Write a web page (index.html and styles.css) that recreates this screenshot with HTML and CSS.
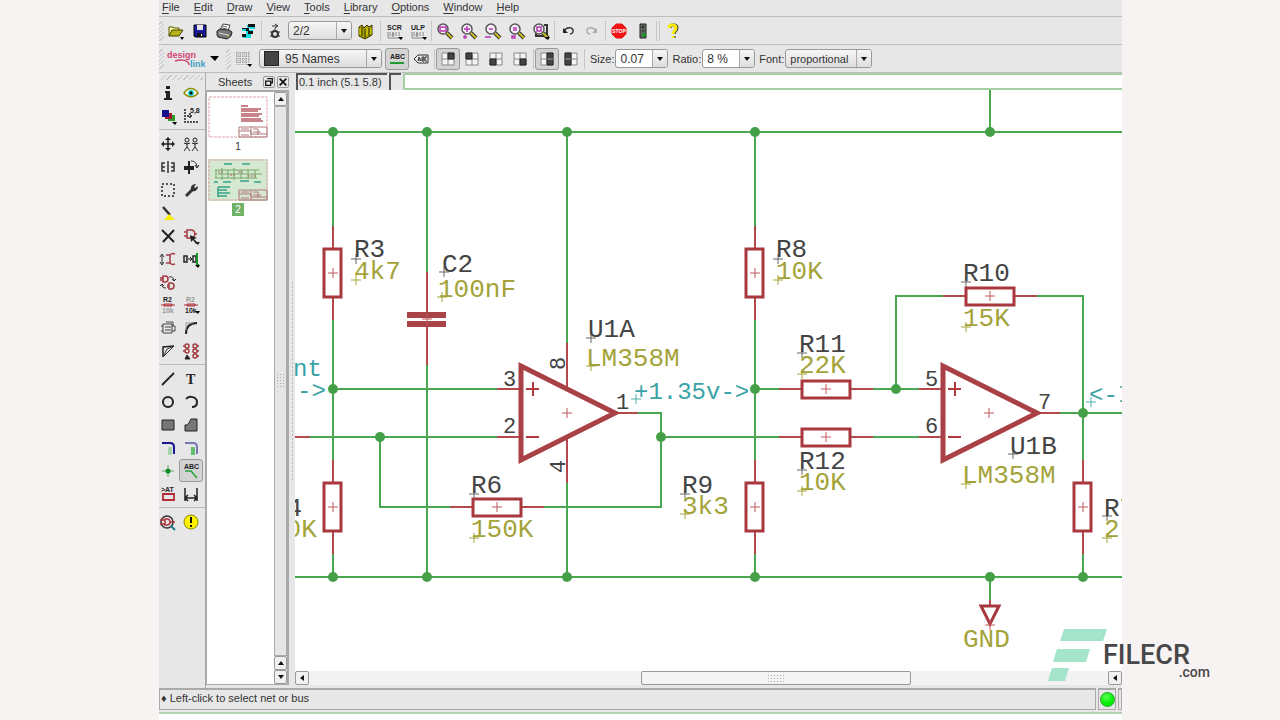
FILE: index.html
```
<!DOCTYPE html>
<html lang="en">
<head>
    <meta charset="UTF-8">
    <meta name="viewport" content="width=device-width, initial-scale=1.0">
    <title>Schematic Editor</title>
    <link rel="stylesheet" href="styles.css">
</head>
<body>
    <div class="window">
        <nav class="menubar">
            <button><u>F</u>ile</button>
            <button><u>E</u>dit</button>
            <button><u>D</u>raw</button>
            <button><u>V</u>iew</button>
            <button><u>T</u>ools</button>
            <button><u>L</u>ibrary</button>
            <button><u>O</u>ptions</button>
            <button><u>W</u>indow</button>
            <button><u>H</u>elp</button>
        </nav>

        <!-- Action toolbar -->
        <div class="toolbar">
            <span class="grip"></span>
            <button class="tool" aria-label="Open"><svg viewBox="0 0 18 18"><path d="M2 14V5h4l1 1h5v2" fill="#ffffa0" stroke="#555500"/><path d="M2 14l3-6h11l-4 6z" fill="#b5b51a" stroke="#444400"/><path d="M13 15h4l-2 3z"/></svg></button>
            <button class="tool" aria-label="Save"><svg viewBox="0 0 18 18"><path d="M3 3h12v12H4l-1-1z" fill="#1818a0" stroke="#000"/><path d="M6 3h6v5H6z" fill="#e8e8e8"/><path d="M6 11h6v4H6z" fill="#111"/><path d="M10 12h1v2h-1z" fill="#fff"/></svg></button>
            <button class="tool" aria-label="Print"><svg viewBox="0 0 18 18"><path d="M5 8l3-6 7 1-2 6z" fill="#fff" stroke="#444"/><path d="M2 9l3-2 9 1 3 2-1 4-4 3-9-2-1-2z" fill="#777" stroke="#222"/><path d="M4 11l9 2" stroke="#ddd"/><path d="M7 4l5 1M7 6l5 1" stroke="#666"/><path d="M12 13h2v1h-2z" fill="#dd3"/></svg></button>
            <button class="tool" aria-label="Board"><svg viewBox="0 0 18 18"><path d="M8 3h8v3H8zM7 8h7v4H7zM4 12h8v4H4z" fill="#18d8e0"/><path d="M9 2h7v3H9zM3 6h7v3H3zM9 9h5v3H9zM3 12h4v3H3z" fill="#111"/><path d="M11 5h5v2h-5zM3 7h4v2H3z" fill="#18d8e0"/></svg></button>
            <span class="separator"></span>
            <button class="tool" aria-label="Use gate"><svg viewBox="0 0 18 18" fill="none" stroke="#333"><circle cx="9" cy="12" r="3" stroke-width="2"/><path d="M9 9V6M4 10h2M12 10h2M4 14h2M12 14h2"/><path d="M6 4h5M9 2l3 2-3 2"/></svg></button>
            <div class="combo sheet-combo">
                <select aria-label="Sheet"><option>2/2</option></select>
                <span class="arrow"></span>
            </div>
            <button class="tool books" aria-label="Library"><svg viewBox="0 0 18 18"><path d="M3 5l3-2 2 3 3-3 2 2 3-2v10l-7 4-6-3z" fill="#aaa000" stroke="#333300"/><path d="M6 5v9M9 7v9M13 6v8" stroke="#333300"/><path d="M4 6v7M11 6v7M15 6v6" stroke="#e2d900"/></svg></button>
            <span class="separator"></span>
            <button class="tool" aria-label="Script"><svg viewBox="0 0 18 18"><text x="2" y="8" class="tiny">SCR</text><path d="M3 10v6h12M5 10v4M8 10l-1 4h2zM11 10v4M14 10v4" fill="none" stroke="#888"/><path d="M13 15h5l-2 3z"/></svg></button>
            <button class="tool" aria-label="ULP"><svg viewBox="0 0 18 18"><text x="2" y="8" class="tiny">ULP</text><path d="M3 10v6h12M5 10v4M8 10l-1 4h2zM11 10v4M14 10v4" fill="none" stroke="#888"/><path d="M13 15h5l-2 3z"/></svg></button>
            <span class="separator"></span>
            <button class="tool" aria-label="Zoom to fit"><svg viewBox="0 0 18 18"><use href="#lens"/><path d="M4 5h6v4H4z" class="zoom-mark"/></svg></button>
            <button class="tool" aria-label="Zoom in"><svg viewBox="0 0 18 18"><use href="#lens"/><path d="M7 4v6M4 7h6M5 13v4M3 15h4" class="zoom-mark"/></svg></button>
            <button class="tool" aria-label="Zoom out"><svg viewBox="0 0 18 18"><use href="#lens"/><path d="M5 7h4M1 15h6" class="zoom-mark"/></svg></button>
            <button class="tool" aria-label="Redraw"><svg viewBox="0 0 18 18"><use href="#lens"/><path d="M5 6h4M5 8h4M4 14h3v2H4z" class="zoom-mark"/></svg></button>
            <button class="tool" aria-label="Zoom select"><svg viewBox="0 0 18 18"><path d="M12 3h3v11H4v-3" fill="none" stroke="#333" stroke-width="2"/><use href="#lens"/><path d="M5 5h4v4H5z" class="zoom-mark"/><path d="M13 15h5l-2 3z"/></svg></button>
            <span class="separator"></span>
            <button class="tool" aria-label="Undo"><svg viewBox="0 0 18 18"><path d="M5 9c3-5 10-4 9 1-1 2-2 2-3 2" fill="none" stroke="#333" stroke-width="1.5"/><path d="M4 6v5h5z" fill="#222"/></svg></button>
            <button class="tool" aria-label="Redo"><svg viewBox="0 0 18 18"><path d="M13 9C10 4 3 5 4 10c1 2 2 2 3 2" fill="none" stroke="#aaa" stroke-width="1.5"/><path d="M14 6v5H9z" fill="#aaa"/></svg></button>
            <span class="separator"></span>
            <button class="tool" aria-label="Stop"><svg viewBox="0 0 18 18"><path d="M6 2h6l4 4v6l-4 4H6l-4-4V6z" fill="#f01414" stroke="#f01414"/><text x="9" y="11" class="stop-text">STOP</text></svg></button>
            <button class="tool" aria-label="Go"><svg viewBox="0 0 18 18"><path d="M6 2h6v14H6z" fill="#667066" stroke="#222"/><circle cx="9" cy="5" r="1.5" fill="#333"/><circle cx="9" cy="9" r="1.5" fill="#444"/><circle cx="10" cy="13" r="2" fill="#139a24"/></svg></button>
            <span class="separator double"></span>
            <button class="tool" aria-label="Help"><svg viewBox="0 0 18 18" fill="none"><path d="M6 6c0-4 7-4 7 0 0 3-3 3-3 6M10 14v2" stroke="#333" stroke-width="3"/><path d="M5 6c0-4 7-4 7 0 0 3-3 3-3 6M9 14v2" stroke="#f5ec00" stroke-width="3"/></svg></button>
        </div>

        <!-- Parameter toolbar -->
        <div class="toolbar">
            <span class="grip"></span>
            <button class="brand" aria-label="Design link"><svg viewBox="0 0 56 20"><text x="3" y="9" class="brand-design">design</text><text x="26" y="18" class="brand-link">link</text><path d="M11 12c6-2 14-1 14 4" fill="none" stroke="#cf4470" stroke-width="1.5"/><path d="M46 7h9l-4 5z"/></svg></button>
            <span class="grip"></span>
            <button class="tool" aria-label="Grid"><svg viewBox="0 0 18 18"><path d="M2 3h13M2 6h13M2 9h13M2 12h13M3 2v13M6 2v13M9 2v13M12 2v13M15 2v10" stroke="#888" stroke-dasharray="1 1"/><path d="M13 14h5l-2 3z"/></svg></button>
            <div class="combo layer-combo">
                <span class="swatch"></span>
                <select aria-label="Layer"><option>95 Names</option></select>
                <span class="arrow"></span>
            </div>
            <button class="tool pressed" aria-label="Show label"><svg viewBox="0 0 18 18"><text x="2" y="9" class="tiny">ABC</text><path d="M2 13h14" stroke="#1f9a33" stroke-width="2"/></svg></button>
            <button class="tool" aria-label="Cross reference"><svg viewBox="0 0 18 18"><path d="M2 9l4-4h10v8H6z" fill="none" stroke="#333"/><path d="M6 11l1-4 2 4M6 10h2M10 7v4M10 7h2v4h-2M10 9h2M15 7h-2v4h2" fill="none" stroke="#333"/></svg></button>
            <span class="separator"></span>
            <button class="tool pressed" aria-label="Align top right"><svg viewBox="0 0 18 18"><use href="#quad"/><path d="M9 3h6v6H9z" class="quad-fill"/></svg></button>
            <button class="tool" aria-label="Align top left"><svg viewBox="0 0 18 18"><use href="#quad"/><path d="M3 3h6v6H3z" class="quad-fill"/></svg></button>
            <button class="tool" aria-label="Align bottom left"><svg viewBox="0 0 18 18"><use href="#quad"/><path d="M3 9h6v6H3z" class="quad-fill"/></svg></button>
            <button class="tool" aria-label="Align bottom right"><svg viewBox="0 0 18 18"><use href="#quad"/><path d="M9 9h6v6H9z" class="quad-fill"/></svg></button>
            <span class="separator"></span>
            <button class="tool pressed" aria-label="Align right"><svg viewBox="0 0 18 18"><use href="#quad"/><path d="M9 3h6v12H9z" class="quad-fill"/><path d="M9 9h6" stroke="#999"/></svg></button>
            <button class="tool" aria-label="Align left"><svg viewBox="0 0 18 18"><use href="#quad"/><path d="M3 3h6v12H3z" class="quad-fill"/><path d="M3 9h6" stroke="#999"/></svg></button>
            <span class="separator"></span>
            <label class="field-label" for="size">Size:</label>
            <div class="combo editable size-combo">
                <select id="size"><option>0.07</option></select>
                <span class="arrow"></span>
            </div>
            <label class="field-label" for="ratio">Ratio:</label>
            <div class="combo editable size-combo">
                <select id="ratio"><option>8 %</option></select>
                <span class="arrow"></span>
            </div>
            <label class="field-label" for="font">Font:</label>
            <div class="combo font-combo">
                <select id="font"><option>proportional</option></select>
                <span class="arrow"></span>
            </div>
        </div>

        <div class="main">
            <!-- Command palette -->
            <aside class="palette">
                <span class="palette-grip"></span>
                <div class="palette-group">
                    <button aria-label="Info"><svg viewBox="0 0 18 18"><path d="M7 2h4v3H7zM6 7h5v7h2v2H5v-2h2V9H6z" fill="#222"/></svg></button>
                    <button aria-label="Show"><svg viewBox="0 0 18 18"><path d="M2 9c4-6 10-6 14 0-4 5-10 5-14 0z" fill="#fff" stroke="#8c8c00" stroke-width="1.5"/><circle cx="9" cy="9" r="3" fill="#1cc"/><circle cx="9" cy="9" r="1.5"/></svg></button>
                    <button aria-label="Display"><svg viewBox="0 0 18 18"><path d="M9 8h7v6H9z" fill="#2c9a2c"/><path d="M6 6h7v6H6z" fill="#a01830"/><path d="M3 3h7v7H3z" fill="#111190"/><path d="M13 15h5l-2 3z"/></svg></button>
                    <button aria-label="Mark"><svg viewBox="0 0 18 18"><path d="M3 2v13h13M5 9h5M8 6v5" fill="none" stroke="#222" stroke-width="1.5" stroke-dasharray="2 1"/><text x="8" y="6" class="tiny">5,8</text></svg></button>
                </div>
                <div class="palette-group">
                    <button aria-label="Move"><svg viewBox="0 0 18 18"><path d="M9 3v12M3 9h12" stroke="#222" stroke-width="1.5"/><path d="M9 2l3 3H6zM9 16l3-3H6zM2 9l3-3v6zM16 9l-3-3v6z" fill="#222"/></svg></button>
                    <button aria-label="Copy"><svg viewBox="0 0 18 18" fill="none" stroke="#222"><circle cx="5" cy="5" r="2"/><circle cx="13" cy="5" r="2"/><path d="M2 8l3 1 3-1M5 8v4l-3 4M5 12l3 4M10 8l3 1 3-1M13 8v4l-3 4M13 12l3 4"/></svg></button>
                    <button aria-label="Mirror"><svg viewBox="0 0 18 18" fill="none" stroke="#333"><path d="M6 5H3v8h3M3 9h3M12 5h3v8h-3M12 9h3M9 3v12" stroke-width="1.5"/></svg></button>
                    <button aria-label="Rotate"><svg viewBox="0 0 18 18" fill="none" stroke="#222"><path d="M7 3v13M2 9h10M2 11h10" stroke-width="2"/><path d="M9 3c4 0 6 3 6 6M13 7l2 3 2-3"/></svg></button>
                    <button aria-label="Group"><svg viewBox="0 0 18 18"><path d="M3 3h12v12H3z" fill="none" stroke="#222" stroke-width="1.5" stroke-dasharray="2 2"/></svg></button>
                    <button aria-label="Change"><svg viewBox="0 0 18 18"><path d="M4 15l7-7" stroke="#333" stroke-width="3"/><path d="M9 9c-1-4 2-6 5-6l-2 3 1 1 3-2c0 4-3 6-6 5z" fill="#333"/></svg></button>
                    <button aria-label="Paste"><svg viewBox="0 0 18 18"><path d="M4 3l7 8" stroke="#333" stroke-width="2.5"/><path d="M10 10l6 6H5z" fill="#f8f000"/></svg></button>
                    <span></span>
                    <button aria-label="Delete"><svg viewBox="0 0 18 18"><path d="M3 3l12 12M15 3L4 15" stroke="#222" stroke-width="2"/></svg></button>
                    <button aria-label="Add"><svg viewBox="0 0 18 18"><path d="M5 3h4c5 0 5 8 0 8H5zM2 5h3M2 9h3M12 7h3" fill="none" stroke="#a33b40" stroke-width="1.5"/><path d="M8 8l7 3-3 1 4 4-2 1-3-4-2 2zM13 15h5l-2 3z" fill="#222"/></svg></button>
                    <button aria-label="Pinswap"><svg viewBox="0 0 18 18" fill="none"><path d="M3 5v9M1 7l2-3 2 3M1 12l2 3 2-3" stroke="#333"/><path d="M16 4c-3-1-5 0-5 2v6c0 2 2 3 5 2M7 5h4M7 13h4" stroke="#a33b40" stroke-width="1.5"/></svg></button>
                    <button aria-label="Replace"><svg viewBox="0 0 18 18"><path d="M2 6h3v6H2zM11 6h3v6h-3z" fill="none" stroke="#222" stroke-width="1.5"/><path d="M6 9h4M8 7l2 2-2 2" stroke="#222" fill="none"/><path d="M15 3v12h2" fill="none" stroke="#17942a" stroke-width="2"/><path d="M13 15h5l-2 3z"/></svg></button>
                    <button aria-label="Gateswap"><svg viewBox="0 0 18 18" fill="none" stroke="#a33b40"><path d="M4 3h2c4 0 4 6 0 6H4zM1 5h3M1 7h3M10 10h2c4 0 4 6 0 6h-2zM8 12h2M8 14h2" stroke-width="1.5"/><path d="M10 4c3-1 5 1 5 4M13 6l2 2 2-2M7 15c-3 0-4-1-4-4M1 13l2-2 2 2" stroke="#333"/></svg></button>
                    <span></span>
                    <button aria-label="Name"><svg viewBox="0 0 18 18"><text x="4" y="6" class="tiny">R2</text><path d="M2 9h14M5 8h8v2H5z" stroke="#b03038" fill="none"/><text x="3" y="17" class="tiny faded">10k</text></svg></button>
                    <button aria-label="Value"><svg viewBox="0 0 18 18"><text x="4" y="6" class="tiny faded">R2</text><path d="M2 9h14M5 8h8v2H5z" stroke="#b03038" fill="none"/><text x="3" y="17" class="tiny">10k</text><path d="M13 15h5l-2 3z"/></svg></button>
                    <button aria-label="Smash"><svg viewBox="0 0 18 18" fill="none" stroke="#444"><path d="M4 5h9v9H4zM2 7h2M2 12h2M13 7h3v5h-3M7 3h7v4M6 8h6M6 11h6"/></svg></button>
                    <button aria-label="Miter"><svg viewBox="0 0 18 18" fill="none"><path d="M4 15C4 8 8 4 15 4" stroke="#222" stroke-width="2"/><path d="M4 11V4h7" stroke="#999"/></svg></button>
                    <button aria-label="Split"><svg viewBox="0 0 18 18" fill="none"><path d="M4 15V5l11-1" stroke="#222" stroke-width="1.5"/><path d="M4 15l4-8 7-3M4 15l11-11" stroke="#333"/></svg></button>
                    <button aria-label="Invoke"><svg viewBox="0 0 18 18" fill="none" stroke="#a33b40" stroke-width="1.5"><circle cx="5" cy="4" r="2"/><circle cx="13" cy="4" r="2"/><circle cx="5" cy="9" r="2"/><circle cx="13" cy="9" r="2"/><circle cx="13" cy="14" r="2"/><path d="M1 4h2M15 4h2M1 9h2M15 9h2M15 14h2"/><path d="M3 17l2-4 3 4z" fill="#222" stroke="#222" stroke-width="1"/></svg></button>
                </div>
                <div class="palette-group">
                    <button aria-label="Wire"><svg viewBox="0 0 18 18"><path d="M3 15L15 3" stroke="#222" stroke-width="1.8"/></svg></button>
                    <button aria-label="Text"><svg viewBox="0 0 18 18"><text x="4" y="14" class="letter">T</text></svg></button>
                    <button aria-label="Circle"><svg viewBox="0 0 18 18"><circle cx="9" cy="9" r="5" fill="none" stroke="#222" stroke-width="2"/></svg></button>
                    <button aria-label="Arc"><svg viewBox="0 0 18 18"><path d="M4 6c3-4 11-2 11 3 0 3-2 5-5 5" fill="none" stroke="#222" stroke-width="2"/></svg></button>
                    <button aria-label="Rectangle"><svg viewBox="0 0 18 18"><path d="M3 4h12v10H3z" fill="#777" stroke="#222"/></svg></button>
                    <button aria-label="Polygon"><svg viewBox="0 0 18 18"><path d="M3 15V9c4 0 4-3 6-6h6v12z" fill="#777" stroke="#222"/></svg></button>
                    <button aria-label="Bus"><svg viewBox="0 0 18 18" fill="none"><path d="M11 8v8" stroke="#a5d3aa" stroke-width="4"/><path d="M3 4h8c3 0 4 2 4 4v7" stroke="#17178d" stroke-width="2"/></svg></button>
                    <button aria-label="Net"><svg viewBox="0 0 18 18" fill="none"><path d="M11 8v8" stroke="#60bf6c" stroke-width="4"/><path d="M3 4h8c3 0 4 2 4 4v7" stroke="#7777b5" stroke-width="2"/></svg></button>
                    <button aria-label="Junction"><svg viewBox="0 0 18 18"><path d="M9 3v12M3 9h12" stroke="#60a968"/><circle cx="9" cy="9" r="2.5" fill="#128b22"/></svg></button>
                    <button class="pressed" aria-label="Label"><svg viewBox="0 0 18 18"><text x="2" y="7" class="tiny">ABC</text><path d="M3 9h6l6 7" fill="none" stroke="#26a43d" stroke-width="1.5"/></svg></button>
                    <button aria-label="Attribute"><svg viewBox="0 0 18 18"><text x="2" y="7" class="tiny">&gt;AT</text><path d="M4 9h11v6H4z" fill="none" stroke="#b32c35" stroke-width="1.8"/></svg></button>
                    <button aria-label="Dimension"><svg viewBox="0 0 18 18"><path d="M3 3v13M15 3v13M3 13h12M6 10l-3 3 3 3M12 10l3 3-3 3" fill="none" stroke="#222" stroke-width="1.5"/></svg></button>
                </div>
                <div class="palette-group">
                    <button aria-label="ERC"><svg viewBox="0 0 18 18" fill="none"><circle cx="8" cy="9" r="6" stroke="#333" stroke-width="1.5"/><path d="M1 7h5M1 11h5M6 6h2c4 0 4 6 0 6H6zM11 9h5" stroke="#b3333a" stroke-width="1.5"/><path d="M12 13l4 4" stroke="#168287" stroke-width="2"/></svg></button>
                    <button aria-label="Errors"><svg viewBox="0 0 18 18"><circle cx="9" cy="9" r="7" fill="#fff200" stroke="#888800"/><path d="M9 4v6M9 12v2" stroke="#111" stroke-width="2"/></svg></button>
                </div>
            </aside>

            <!-- Sheet list -->
            <section class="sheets">
                <header class="sheets-header">
                    <h2>Sheets</h2>
                    <button aria-label="Float"><svg viewBox="0 0 12 12"><path d="M4 2h6v5H8M2 5h6v5H2z" fill="none" stroke="#111" stroke-width="1.5"/></svg></button>
                    <button aria-label="Close"><svg viewBox="0 0 12 12"><path d="M2 2l8 8M10 2l-8 8" stroke="#111" stroke-width="2"/></svg></button>
                </header>
                <div class="sheets-body">
                    <div class="sheet-list">
                        <figure class="sheet">
                            <svg viewBox="0 0 60 42"><path d="M1 1h58v40H1z" class="sheet-frame"/><path d="M33 10h7M33 13h20M33 15h17M33 18h21M33 20h18M33 23h20M33 25h22" stroke="#b65c64" stroke-width="1.5"/><use href="#title-block"/></svg>
                            <figcaption>1</figcaption>
                        </figure>
                        <figure class="sheet active">
                            <svg viewBox="0 0 60 42"><path d="M1 1h58v40H1z" class="sheet-frame"/><path d="M7 11h44M7 19h42M8 11v8M14 9v12M20 11v8M26 9v12M33 11v9M40 10v10M47 11v8M10 15h44" fill="none" stroke="#74a866"/><path d="M10 13h5M22 16h5M30 13h6M40 17h8" stroke="#ab6a62" stroke-dasharray="2 1"/><path d="M16 5h8M34 5h8M6 23h4M15 23h8M32 22h9M46 23h7M10 28h12M10 31h9M10 34h12M10 37h9M10 28v10" stroke="#35a28a" stroke-width="1.5"/><use href="#title-block"/></svg>
                            <figcaption>2</figcaption>
                        </figure>
                    </div>
                    <div class="vscroll">
                        <button class="up" aria-label="Scroll up"></button>
                        <span class="vthumb"></span>
                        <button class="up" aria-label="Scroll up"></button>
                        <button class="down" aria-label="Scroll down"></button>
                    </div>
                </div>
            </section>
            <span class="splitter"></span>

            <!-- Drawing area -->
            <section class="editor">
                <div class="command-row">
                    <span class="coords">0.1 inch (5.1 5.8)</span>
                    <span class="coords-extra"></span>
                    <input type="text" class="command" aria-label="Command">
                </div>
                <div class="canvas">
                    <svg class="schematic">
                        <defs>
                            <g id="dot"><circle r="5"/></g>
                            <path id="cross" d="M-5 0H5M0-5V5"/>
                            <g id="resistor"><path d="M-47 0h24M23 0h24" class="pin"/><path d="M-24-8h48v17h-48z" class="body"/><use href="#cross" class="origin"/></g>
                            <g id="opamp"><path d="M-70-24h24M-70 24h24M48 0h23" class="pin"/><path d="M-46-47v94L48 0z" class="amp"/><path d="M-41-24h13M-34-31v14M-41 24h13" class="sign"/><use href="#cross" class="origin"/></g>
                        </defs>
                        <g transform="translate(-295 -90)">
                            <path class="net" d="M295 132H1122M295 577H1122M990 90V132M990 577V600
                                M333 132V226M333 319V460M333 553V577
                                M427 132V272M427 365V577M567 132V343M567 483V577
                                M755 132V226M755 319V460M755 553V577
                                M333 389H497M310 437H497M380 437V507H450M544 507H661V413H638M661 437H779
                                M755 389H779M873 389H919M873 437H919M896 389V296H943M1037 296H1083V460M1083 553V577M1060 413H1122"/>
                            <path class="pin" d="M295 437H310M427 272V314M427 326V365M567 343V388M567 437V483M990 600V606"/>
                            <path class="plate" d="M407 315H446M407 324H446"/>
                            <path class="body" d="M981 606H999L990 624Z"/>

                            <use href="#resistor" transform="translate(333 273) rotate(90)"/>
                            <use href="#resistor" transform="translate(333 507) rotate(90)"/>
                            <use href="#resistor" transform="translate(755 273) rotate(90)"/>
                            <use href="#resistor" transform="translate(755 507) rotate(90)"/>
                            <use href="#resistor" transform="translate(1083 507) rotate(90)"/>
                            <use href="#resistor" x="497" y="507"/>
                            <use href="#resistor" x="826" y="389"/>
                            <use href="#resistor" x="826" y="437"/>
                            <use href="#resistor" x="990" y="296"/>
                            <use href="#opamp" x="567" y="413"/>
                            <use href="#opamp" x="989" y="413"/>

                            <g class="junctions">
                                <use href="#dot" x="333" y="132"/><use href="#dot" x="427" y="132"/><use href="#dot" x="567" y="132"/><use href="#dot" x="755" y="132"/><use href="#dot" x="990" y="132"/>
                                <use href="#dot" x="333" y="577"/><use href="#dot" x="427" y="577"/><use href="#dot" x="567" y="577"/><use href="#dot" x="755" y="577"/><use href="#dot" x="990" y="577"/><use href="#dot" x="1083" y="577"/>
                                <use href="#dot" x="333" y="389"/><use href="#dot" x="380" y="437"/><use href="#dot" x="661" y="437"/><use href="#dot" x="755" y="389"/><use href="#dot" x="896" y="389"/><use href="#dot" x="1083" y="413"/>
                            </g>

                            <g class="origin"><use href="#cross" x="427" y="319"/><use href="#cross" x="990" y="625"/></g>
                            <g class="name-mark">
                                <use href="#cross" x="356" y="259"/><use href="#cross" x="444" y="272"/><use href="#cross" x="591" y="338"/><use href="#cross" x="778" y="259"/><use href="#cross" x="966" y="282"/><use href="#cross" x="802" y="353"/><use href="#cross" x="802" y="470"/><use href="#cross" x="1013" y="454"/><use href="#cross" x="474" y="494"/><use href="#cross" x="685" y="494"/><use href="#cross" x="1107" y="516"/>
                            </g>
                            <g class="value-mark">
                                <use href="#cross" x="356" y="280"/><use href="#cross" x="442" y="297"/><use href="#cross" x="591" y="366"/><use href="#cross" x="778" y="280"/><use href="#cross" x="966" y="327"/><use href="#cross" x="802" y="374"/><use href="#cross" x="802" y="491"/><use href="#cross" x="966" y="484"/><use href="#cross" x="474" y="538"/><use href="#cross" x="685" y="514"/><use href="#cross" x="1107" y="538"/>
                            </g>
                            <g class="net-mark"><use href="#cross" x="636" y="399"/><use href="#cross" x="1091" y="402"/></g>

                            <g class="name">
                                <text x="354" y="257">R3</text>
                                <text x="442" y="272">C2</text>
                                <text x="588" y="337">U1A</text>
                                <text x="776" y="257">R8</text>
                                <text x="963" y="281">R10</text>
                                <text x="799" y="352">R11</text>
                                <text x="799" y="469">R12</text>
                                <text x="1010" y="454">U1B</text>
                                <text x="471" y="493">R6</text>
                                <text x="682" y="493">R9</text>
                                <text x="271" y="516">R4</text>
                                <text x="1104" y="516">R7</text>
                            </g>
                            <g class="value">
                                <text x="354" y="279">4k7</text>
                                <text x="438" y="297">100nF</text>
                                <text x="586" y="366">LM358M</text>
                                <text x="776" y="279">10K</text>
                                <text x="963" y="326">15K</text>
                                <text x="799" y="373">22K</text>
                                <text x="799" y="490">10K</text>
                                <text x="962" y="483">LM358M</text>
                                <text x="471" y="537">150K</text>
                                <text x="682" y="514">3k3</text>
                                <text x="270" y="537">10K</text>
                                <text x="1104" y="537">2k</text>
                                <text x="963" y="647">GND</text>
                            </g>
                            <g class="net-label">
                                <text x="293" y="376">nt</text>
                                <text x="297" y="398">-&gt;</text>
                                <text x="634" y="399">+1.35v-&gt;</text>
                                <text x="1089" y="402">&lt;-I</text>
                            </g>
                            <g class="pin-number">
                                <text x="503" y="386">3</text>
                                <text x="503" y="433">2</text>
                                <text x="616" y="409">1</text>
                                <text x="925" y="386">5</text>
                                <text x="925" y="433">6</text>
                                <text x="1038" y="409">7</text>
                                <text transform="translate(565 370) rotate(-90)">8</text>
                                <text transform="translate(565 473) rotate(-90)">4</text>
                            </g>
                        </g>
                    </svg>
                </div>
                <div class="hscroll">
                    <button class="left" aria-label="Scroll left"></button>
                    <span class="track"></span>
                    <span class="hthumb"></span>
                    <span class="track-end"></span>
                    <button class="left" aria-label="Scroll left"></button>
                </div>
            </section>
        </div>

        <footer class="statusbar">
            <span class="message">♦ Left-click to select net or bus</span>
            <span class="led-box"><span class="led"></span></span>
            <span class="led-next"></span>
        </footer>
        <div class="bottom-edge"></div>
    </div>

    <div class="watermark">
        <svg viewBox="0 0 60 52"><path d="M16 0h43l-4 12H12zM9 20h33l-4 13H5zM4 39h17l-4 13H0z" fill="#a3e4cb"/></svg>
        <div class="watermark-text">
            <strong>FILECR</strong>
            <span>.com</span>
        </div>
    </div>

    <!-- Shared icon parts -->
    <svg class="shared" aria-hidden="true">
        <defs>
            <g id="lens"><circle cx="7" cy="7" r="5" fill="#f7eef7" stroke="#555" stroke-width="1.5"/><path d="M11 11l5 5" stroke="#333" stroke-width="4"/><path d="M11 11l5 5" stroke="#c9c021" stroke-width="2"/></g>
            <path id="quad" d="M3 3h12v12H3zM9 3v12M3 9h12" fill="#f4f4f4" stroke="#888"/>
            <path id="title-block" d="M31 31h28v10H31zM31 35h12v3h16M43 31v10M50 33v6M33 33h8M45 36h8M33 39h8M45 33h5" fill="none" stroke="#b0787c"/>
        </defs>
    </svg>
</body>
</html>
```
FILE: styles.css
```
* {
    box-sizing: border-box;
}

body {
    margin: 0;
    height: 100vh;
    background: #f7f3f2;
    color: #333;
    font-family: "Liberation Sans", Arial, sans-serif;
    font-size: 11px;
    overflow: hidden;
}

button {
    margin: 0;
    padding: 0;
    border: none;
    background: none;
    color: inherit;
    font: inherit;
}

.window {
    display: flex;
    flex-direction: column;
    height: 100vh;
    margin: 0 158px 0 159px;
    background: #e7e7e7;
}

.shared {
    display: none;
}

/* Menu bar */
.menubar {
    display: flex;
    gap: 14px;
    height: 16px;
    padding: 0 3px;
}

.menubar button {
    height: 14px;
    line-height: 12px;
}

.menubar u {
    text-underline-offset: 2px;
}

/* Toolbars */
.toolbar {
    display: flex;
    align-items: center;
    height: 28px;
    border-top: 1px solid #bdbdbd;
}

.grip {
    width: 5px;
    height: 20px;
    background: repeating-linear-gradient(135deg, #e7e7e7 0 2px, #c9c9c9 2px 3px);
}

.tool {
    display: flex;
    justify-content: center;
    align-items: center;
    flex: none;
    width: 24px;
    height: 22px;
    border: 1px solid transparent;
    border-radius: 3px;
}

.tool svg,
.palette svg {
    width: 18px;
    height: 18px;
    flex: none;
}

.tool.pressed,
.palette .pressed {
    background: #d3d3d3;
    border: 1px solid #999;
}

.separator {
    flex: none;
    width: 1px;
    height: 20px;
    margin: 0 1px;
    background: #c6c6c6;
}

.separator.double {
    width: 4px;
    border: solid #c6c6c6;
    border-width: 0 1px;
    background: none;
}

.tiny {
    font: bold 7px "Liberation Sans", Arial, sans-serif;
    fill: #222;
}

.faded {
    fill: #999;
}

.letter {
    font: bold 14px "Liberation Serif", serif;
    fill: #222;
}

.stop-text {
    font: bold 5px "Liberation Sans", Arial, sans-serif;
    fill: #fff;
    text-anchor: middle;
}

.zoom-mark {
    fill: none;
    stroke: #b63bb6;
    stroke-width: 1.5;
}

.quad-fill {
    fill: #444;
    stroke: #222;
}

.brand {
    width: 62px;
    height: 22px;
}

.brand svg {
    display: block;
    width: 56px;
    height: 20px;
}

.brand-design {
    font: bold 9px "Liberation Sans", Arial, sans-serif;
    fill: #d2446f;
}

.brand-link {
    font: bold 9px "Liberation Sans", Arial, sans-serif;
    fill: #3f9fc4;
}

.combo {
    display: flex;
    align-items: center;
    flex: none;
    height: 19px;
    border: 1px solid #999;
    border-radius: 3px;
    background: linear-gradient(#f6f6f6, #dedede);
    overflow: hidden;
}

.combo select {
    flex: 1;
    min-width: 0;
    height: 17px;
    padding: 0 4px;
    border: none;
    appearance: none;
    background: transparent;
    color: #333;
    font: 12px "Liberation Sans", Arial, sans-serif;
}

.combo.editable {
    background: #fff;
}

.arrow {
    display: flex;
    justify-content: center;
    align-items: center;
    flex: none;
    width: 15px;
    height: 17px;
    border-left: 1px solid #aaa;
    background: linear-gradient(#f6f6f6, #dedede);
}

.arrow::before {
    content: "";
    border: solid transparent;
    border-width: 4px 3px 0;
    border-top-color: #111;
}

.sheet-combo {
    width: 64px;
    margin: 0 1px;
}

.books {
    margin-right: 2px;
}

.layer-combo {
    width: 123px;
    margin: 0 3px 0 4px;
}

.size-combo {
    width: 53px;
}

.font-combo {
    width: 87px;
}

.font-combo select {
    font-size: 11px;
}

.swatch {
    flex: none;
    width: 15px;
    height: 15px;
    margin: 0 2px 0 4px;
    border: 1px solid #222;
    background: #444;
}

.field-label {
    padding-left: 4px;
    margin-right: 1px;
}

/* Main area */
.main {
    display: flex;
    flex: 1;
    min-height: 0;
    border-top: 1px solid #bdbdbd;
}

.palette {
    flex: none;
    width: 47px;
    border-right: 1px solid #aaa;
}

.palette-grip {
    display: block;
    width: 42px;
    height: 5px;
    margin: 2px 2px 1px;
    background: repeating-linear-gradient(135deg, #e7e7e7 0 3px, #c4c4c4 3px 4px);
}

.palette-group {
    display: grid;
    grid-template-columns: 20px 24px;
    grid-auto-rows: 23px;
}

.palette-group + .palette-group {
    margin-top: 2px;
    padding-top: 2px;
    border-top: 1px solid #bbb;
}

.palette-group button {
    display: flex;
    justify-content: center;
    align-items: center;
    border-radius: 3px;
}

.palette-group button:nth-child(odd) {
    margin-right: -2px;
    padding-right: 4px;
}

.sheets {
    display: flex;
    flex-direction: column;
    flex: none;
    width: 83px;
    padding-bottom: 3px;
}

.sheets-header {
    display: flex;
    align-items: center;
    gap: 2px;
    height: 17px;
    padding-left: 12px;
}

.sheets-header h2 {
    flex: 1;
    margin: 0;
    font-size: 11px;
    font-weight: normal;
}

.sheets-header button {
    width: 12px;
    height: 12px;
    border: 1px solid #999;
    border-radius: 2px;
}

.sheets-header svg {
    display: block;
    width: 10px;
    height: 10px;
}

.sheets-body {
    display: flex;
    flex: 1;
    min-height: 0;
    border: solid #aaa;
    border-width: 2px 2px 1px 1px;
}

.sheet-list {
    flex: 1;
    background: #fff;
}

.sheet {
    margin: 4px 0 0 1px;
    width: 60px;
    text-align: center;
}

.sheet svg {
    display: block;
    width: 60px;
    height: 42px;
}

.sheet + .sheet {
    margin-top: 6px;
}

.sheet figcaption {
    width: 12px;
    margin: 2px auto 0;
    font-size: 10px;
    line-height: 13px;
}

.sheet-frame {
    fill: none;
    stroke: #dba1a5;
    stroke-dasharray: 3 1;
}

.sheet.active svg {
    background: #d5e8d0;
}

.sheet.active figcaption {
    background: #6fb368;
    color: #fff;
}

.vscroll {
    display: flex;
    flex-direction: column;
    width: 13px;
}

.vscroll button,
.hscroll button {
    display: flex;
    align-items: center;
    justify-content: center;
    flex: none;
    height: 14px;
    border: 1px solid #999;
    border-radius: 2px;
    background: #f1f1f1;
}

.up::before,
.down::before,
.left::before {
    content: "";
    border: solid transparent;
}

.up::before {
    border-width: 0 3px 4px;
    border-bottom-color: #111;
}

.down::before {
    border-width: 4px 3px 0;
    border-top-color: #111;
}

.left::before {
    border-width: 3px 4px 3px 0;
    border-right-color: #111;
}

.vthumb {
    display: flex;
    flex: 1;
    align-items: center;
    justify-content: center;
    border: 1px solid #aaa;
    background: #e6e6e6;
}

.vthumb::before {
    content: "";
    width: 9px;
    height: 16px;
    background: radial-gradient(#aaa 1px, transparent 1px) 0 0 / 3px 3px;
}

.splitter {
    display: flex;
    align-items: center;
    justify-content: center;
    flex: none;
    width: 6px;
}

.splitter::before {
    content: "";
    width: 3px;
    height: 200px;
    background: radial-gradient(#bbb 1px, transparent 1px) 0 0 / 3px 4px;
}

.editor {
    display: flex;
    flex-direction: column;
    flex: 1;
    min-width: 0;
}

.command-row {
    display: flex;
    gap: 2px;
    height: 17px;
    padding-left: 1px;
}

.coords,
.coords-extra {
    border: solid #555;
    border-width: 2px 0 0 2px;
}

.coords {
    width: 91px;
    padding-left: 1px;
    line-height: 14px;
    white-space: nowrap;
}

.coords-extra {
    width: 12px;
}

.command {
    flex: 1;
    min-width: 0;
    border: 2px solid #a5cfa0;
    border-right: none;
    border-radius: 2px 0 0 2px;
    background: #fff;
}

.canvas {
    flex: 1;
    min-height: 0;
    background: #fff;
}

/* Schematic drawing */
.schematic {
    display: block;
    width: 100%;
    height: 100%;
    fill: none;
}

.schematic text {
    font: 26px "Liberation Mono", "Courier New", monospace;
}

.net {
    stroke: #4aa94e;
    stroke-width: 2;
}

.junctions {
    fill: #43a047;
}

.pin {
    stroke: #b5484d;
    stroke-width: 2;
}

.body {
    stroke: #a8383d;
    stroke-width: 3;
}

.amp {
    stroke: #a84045;
    stroke-width: 5;
}

.plate {
    stroke: #a84347;
    stroke-width: 6;
}

.sign {
    stroke: #b0383e;
    stroke-width: 2;
}

.origin {
    stroke: #c0585d;
}

.name-mark {
    stroke: #666;
}

.value-mark {
    stroke: #a5a53c;
}

.net-mark {
    stroke: #4fb0b0;
}

.name,
.pin-number {
    fill: #444;
}

.value {
    fill: #a3a339;
}

.net-label {
    fill: #39a3a6;
}

.schematic .net-label text {
    font-size: 24px;
}

.schematic .pin-number text {
    font-size: 22px;
}

/* Horizontal scroll bar */
.hscroll {
    display: flex;
    height: 14px;
    margin-bottom: 3px;
    background: #f2f2f2;
}

.hscroll button {
    width: 14px;
}

.track {
    flex: 333;
}

.hthumb {
    display: flex;
    align-items: center;
    justify-content: center;
    flex: 269;
    border: 1px solid #999;
    border-radius: 2px;
    background: #f4f4f4;
}

.hthumb::before {
    content: "";
    width: 18px;
    height: 9px;
    background: radial-gradient(#aaa 1px, transparent 1px) 0 0 / 3px 3px;
}

.track-end {
    flex: 198;
}

/* Status bar */
.statusbar {
    display: flex;
    gap: 2px;
    height: 22px;
}

.statusbar > span {
    border: 1px solid #aaa;
    border-top-width: 2px;
}

.message {
    flex: 1;
    padding-left: 1px;
    line-height: 17px;
    white-space: nowrap;
}

.led-box {
    display: flex;
    align-items: center;
    justify-content: center;
    width: 18px;
}

.led {
    width: 15px;
    height: 15px;
    border: 1px solid #25a825;
    border-radius: 50%;
    background: radial-gradient(circle at 40% 30%, #5f5, #0e0 60%);
}

.led-next {
    width: 4px;
}

.bottom-edge {
    height: 10px;
    border-top: 2px solid #e7e7e7;
    background: linear-gradient(#b7d3b5 2px, #fff 2px);
}

/* Site mark over the page corner */
.watermark {
    position: absolute;
    right: 70px;
    bottom: 39px;
    display: flex;
    width: 162px;
    height: 52px;
}

.watermark svg {
    width: 60px;
    height: 52px;
}

.watermark-text {
    display: flex;
    flex-direction: column;
    flex: 1;
    padding: 13px 0 0;
    margin-left: -5px;
    color: #474749;
    font-family: Roboto, sans-serif;
}

.watermark strong {
    font-size: 27px;
    font-weight: 500;
    line-height: 26px;
}

.watermark span {
    align-self: flex-end;
    font-size: 14px;
    font-weight: 500;
    line-height: 8px;
}
```
